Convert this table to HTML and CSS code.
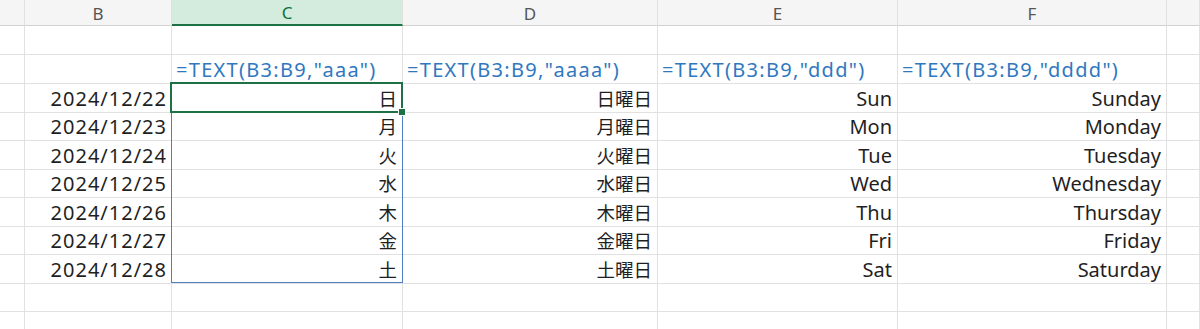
FILE: index.html
```html
<!DOCTYPE html>
<html lang="ja">
<head>
<meta charset="utf-8">
<title>TEXT関数 曜日</title>
<link rel="stylesheet" href="styles.css">
</head>
<body>
<div class="sheet">
  <div class="hd"></div>
  <div class="hd">B</div>
  <div class="hd hd-sel">C</div>
  <div class="hd">D</div>
  <div class="hd">E</div>
  <div class="hd">F</div>
  <div class="hd"></div>

  <div class="c"></div><div class="c"></div><div class="c"></div><div class="c"></div><div class="c"></div><div class="c"></div><div class="c"></div>

  <div class="c"></div>
  <div class="c"></div>
  <div class="c f">=TEXT(B3:B9,"aaa")</div>
  <div class="c f">=TEXT(B3:B9,"aaaa")</div>
  <div class="c f">=TEXT(B3:B9,"ddd")</div>
  <div class="c f">=TEXT(B3:B9,"dddd")</div>
  <div class="c"></div>

  <div class="c"></div><div class="c n d">2024/12/22</div><div class="c n j">日</div><div class="c n j">日曜日</div><div class="c n">Sun</div><div class="c n">Sunday</div><div class="c"></div>
  <div class="c"></div><div class="c n d">2024/12/23</div><div class="c n j">月</div><div class="c n j">月曜日</div><div class="c n">Mon</div><div class="c n">Monday</div><div class="c"></div>
  <div class="c"></div><div class="c n d">2024/12/24</div><div class="c n j">火</div><div class="c n j">火曜日</div><div class="c n">Tue</div><div class="c n">Tuesday</div><div class="c"></div>
  <div class="c"></div><div class="c n d">2024/12/25</div><div class="c n j">水</div><div class="c n j">水曜日</div><div class="c n">Wed</div><div class="c n">Wednesday</div><div class="c"></div>
  <div class="c"></div><div class="c n d">2024/12/26</div><div class="c n j">木</div><div class="c n j">木曜日</div><div class="c n">Thu</div><div class="c n">Thursday</div><div class="c"></div>
  <div class="c"></div><div class="c n d">2024/12/27</div><div class="c n j">金</div><div class="c n j">金曜日</div><div class="c n">Fri</div><div class="c n">Friday</div><div class="c"></div>
  <div class="c"></div><div class="c n d">2024/12/28</div><div class="c n j">土</div><div class="c n j">土曜日</div><div class="c n">Sat</div><div class="c n">Saturday</div><div class="c"></div>

  <div class="c"></div><div class="c"></div><div class="c"></div><div class="c"></div><div class="c"></div><div class="c"></div><div class="c"></div>
  <div class="c"></div><div class="c"></div><div class="c"></div><div class="c"></div><div class="c"></div><div class="c"></div><div class="c"></div>

  <div class="range"></div>
  <div class="active"><span class="handle"></span></div>
</div>
</body>
</html>
```

FILE: styles.css
```css
html, body {
  margin: 0;
  padding: 0;
  background: #ffffff;
  overflow: hidden;
}

.sheet {
  position: relative;
  display: grid;
  grid-template-columns: 25px 147px 231px 255px 240px 269px 33px;
  grid-template-rows: 26px 29px 29px 29px repeat(8, 28.45px);
  width: 1200px;
  height: 329px;
  overflow: hidden;
  font-family: "Noto Sans", "Noto Sans CJK JP", sans-serif;
  color: #1f1f1f;
}

.hd {
  box-sizing: border-box;
  background: #f5f5f5;
  border-right: 1px solid #e0e0e0;
  border-bottom: 1px solid #d2d2d2;
  display: flex;
  align-items: center;
  justify-content: center;
  font-size: 17px;
  color: #555555;
  padding-top: 1px;
}

.hd-sel {
  background: #d3ecdd;
  color: #0f703b;
  border-bottom: 2px solid #1e7145;
}

.c {
  box-sizing: border-box;
  border-right: 1px solid #e1e1e1;
  border-bottom: 1px solid #e1e1e1;
  display: flex;
  align-items: flex-end;
  white-space: nowrap;
  min-width: 0;
  font-size: 20px;
  line-height: 26px;
}

.n {
  justify-content: flex-end;
  padding-right: 5px;
}

.d {
  letter-spacing: 1px;
  padding-right: 4px;
}

.j {
  font-size: 18.5px;
  padding-right: 5px;
}

.f {
  justify-content: flex-start;
  padding-left: 4px;
  color: #2f78c0;
  letter-spacing: 1.3px;
  overflow: visible;
}

.range {
  position: absolute;
  left: 171px;
  top: 83px;
  width: 230px;
  height: 198px;
  border: 1px solid #4f7fc3;
  pointer-events: none;
}

.active {
  position: absolute;
  left: 170px;
  top: 82px;
  width: 229px;
  height: 27px;
  border: 2px solid #1e7145;
  pointer-events: none;
}

.handle {
  position: absolute;
  right: -5px;
  bottom: -5px;
  width: 6px;
  height: 6px;
  background: #1e7145;
  border: 1px solid #ffffff;
}
```
